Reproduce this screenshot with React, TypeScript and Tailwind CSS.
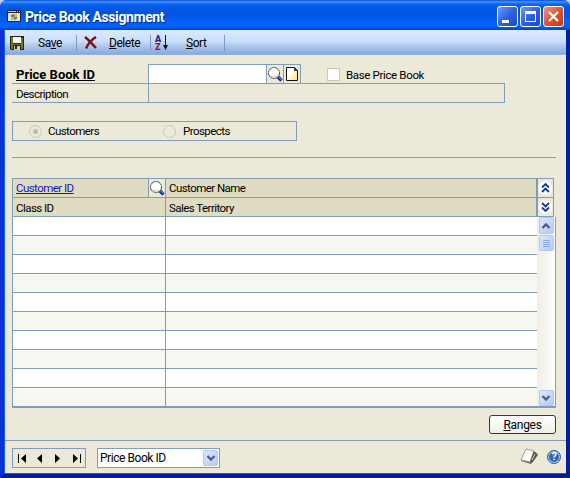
import React from "react";

function Magnifier() {
  return (
    <svg width="16" height="16" viewBox="0 0 16 16">
      <path d="M10.500 10.500l4 4" stroke="#0b2a8c" strokeWidth="3.400" />
      <path d="M11.300 10.700l3 3" stroke="#4f86e8" strokeWidth="1.200" />
      <circle cx="7" cy="7" r="5.500" fill="#fff" stroke="#333" strokeWidth="1" strokeDasharray="2 .5" />
      <path d="M3.700 9.700a4.200 4.200 0 0 0 6 .2" stroke="#b9b9b9" fill="none" />
    </svg>
  );
}

function PageIcon() {
  return (
    <svg width="14" height="16" viewBox="0 0 14 16">
      <defs>
        <linearGradient id="paper" x1="0" y1="0" x2="1" y2="1">
          <stop offset=".35" stopColor="#fff" />
          <stop offset="1" stopColor="#f2ec60" />
        </linearGradient>
      </defs>
      <path d="M1.500 14.500V1.500h8L12.500 4.500v10z" fill="url(#paper)" stroke="#111" />
      <path d="M9 1.500V5h3.500z" fill="#333" />
    </svg>
  );
}

function DoubleChevron({ down = false }: { down?: boolean }) {
  return (
    <svg width="15" height="16" viewBox="0 0 15 16" className={down ? "rotate-180" : ""}>
      <circle cx="7.500" cy="8" r="7" fill="#fff" />
      <path d="M4 7.500L7.500 4L11 7.500M4 12L7.500 8.500L11 12" stroke="#123a94" strokeWidth="1.900" fill="none" />
    </svg>
  );
}

function Chevron({ down = false }: { down?: boolean }) {
  return (
    <svg width="10" height="8" viewBox="0 0 10 8" className={down ? "rotate-180" : ""}>
      <path d="M1.500 6L5 2.500L8.500 6" stroke="#4d6185" strokeWidth="2.400" fill="none" />
    </svg>
  );
}

const scrollButton =
  "flex items-center justify-center rounded-[2px] border border-[#b5c8f5] bg-linear-to-br from-[#dce7ff] to-[#b5c9f8]";

function TitleBar() {
  return (
    <header className="flex h-[30px] shrink-0 items-start pl-[7px] pr-[6px] [background-image:linear-gradient(#0a4ad0_0,#3f94ff_6%,#0867f3_14%,#0055e0_28%,#0055e5_50%,#0063fb_78%,#0062f7_90%,#0041ca_100%)]">
      <svg width="14" height="13" viewBox="0 0 14 13" className="mt-[10px]">
        <path d="M0 0h14v12H0z" fill="#16254f" />
        <path d="M1 3h12v8H1z" fill="#e7e5d9" />
        <path d="M1 1h8v1H1zM10 1h1v1h-1zM12 1h1v1h-1z" fill="#b8c7e9" />
        <path d="M4 5l3-1v3H4z" fill="#3b79d0" />
        <path d="M7 4h3v3H7z" fill="#e4ad2e" />
        <path d="M4 7h3v3H4z" fill="#e9b93c" />
        <path d="M7 7h3v2l-3 1z" fill="#2d93ac" />
      </svg>
      <h1 className="ml-[4px] mt-[8px] whitespace-nowrap text-[14px] leading-[18px] font-bold tracking-[-0.4px] text-white [text-shadow:1px_1px_1px_#002a87]">
        Price Book Assignment
      </h1>
      <div className="ml-auto mt-[6px] flex gap-[2px]">
        <button className="h-[21px] w-[21px] rounded-[3px] border border-white bg-linear-to-br from-[#6f9aff] via-[#2f61e4] to-[#1a48c8] pl-[4px] pt-[9px]">
          <i className="block h-[3px] w-[7px] bg-white" />
        </button>
        <button className="h-[21px] w-[21px] rounded-[3px] border border-white bg-linear-to-br from-[#6f9aff] via-[#2f61e4] to-[#1a48c8] pl-[4px]">
          <i className="block h-[11px] w-[11px] border border-t-[3px] border-white" />
        </button>
        <button className="flex h-[21px] w-[21px] items-center justify-center rounded-[3px] border border-white bg-linear-to-br from-[#ee967c] via-[#e0532b] to-[#c63a12]">
          <svg width="13" height="13" viewBox="0 0 13 13">
            <path d="M2 2l9 9M11 2l-9 9" stroke="#fff" strokeWidth="2.200" />
          </svg>
        </button>
      </div>
    </header>
  );
}

function Toolbar() {
  return (
    <div className="flex h-[25px] shrink-0 items-center pl-[5px] text-[12px] tracking-[-0.45px] [background-image:linear-gradient(#dbe9fd_0,#cbdffa_45%,#b2cbf0_60%,#87a9dc_97%,#a8bcd8_100%)]">
      <svg width="14" height="14" viewBox="0 0 14 14">
        <path d="M0 0h14v14H1L0 13z" fill="#26260e" />
        <path d="M1 1h2v12H1zM11 2h2v11h-2zM3 8h8v1H3z" fill="#77762b" />
        <path d="M3 1h8v6H3z" fill="#f5f7f7" />
        <path d="M4 10h6v4H4z" fill="#c9ced0" />
        <path d="M5 10h2v3H5z" fill="#26260e" />
      </svg>
      <span className="ml-[14px] w-[38px]">Sa<u>v</u>e</span>
      <i className="h-[16px] w-px bg-[#7d9bc9]" />
      <svg width="14" height="14" viewBox="0 0 14 14" className="ml-[7px]">
        <path d="M1 1c4 3 7 7 11 11" stroke="#7c1010" strokeWidth="2.400" fill="none" />
        <path d="M12 1C7 4 4 8 2 12.500" stroke="#7c1010" strokeWidth="2.400" fill="none" />
      </svg>
      <span className="ml-[11px] w-[41px]"><u>D</u>elete</span>
      <i className="h-[16px] w-px bg-[#7d9bc9]" />
      <div className="ml-[4px] flex w-[15px] items-center">
        <div className="flex flex-col text-[9px] leading-[8px] font-black">
          <span className="text-[#17278c]">A</span>
          <span className="text-[#8c1824]">Z</span>
        </div>
        <svg width="7" height="15" viewBox="0 0 7 15" className="ml-px shrink-0">
          <path d="M3 0h1v10h2l-2.500 5L1 10h2z" fill="#111" />
        </svg>
      </div>
      <span className="ml-[16px] w-[38px]"><u>S</u>ort</span>
      <i className="h-[16px] w-px bg-[#7d9bc9]" />
    </div>
  );
}

const line = "border-[#7f9db9]";

function Fields() {
  return (
    <section className="ml-[7px] mt-[9px]">
      <div className="flex h-[19px] items-stretch">
        <div className="w-[136px] pl-[4px] pt-[2px] text-[13px] leading-[17px] font-bold tracking-[0px] underline">Price Book ID</div>
        <div className={`w-[119px] border-x border-t bg-white ${line}`} />
        <div className={`flex w-[17px] items-center border-t border-r ${line}`}><Magnifier /></div>
        <div className={`flex w-[17px] items-center justify-center border-t border-r ${line}`}><PageIcon /></div>
        <div className="ml-[26px] mt-[4px] h-[13px] w-[13px] border border-[#cac8bb] bg-white" />
        <span className="ml-[6px] mt-[2px] whitespace-nowrap tracking-[-0.35px]">Base Price Book</span>
      </div>
      <div className={`flex h-[20px] w-[493px] border-y ${line}`}>
        <div className="w-[136px] pl-[4px] pt-px">Description</div>
        <div className={`flex-1 border-x ${line}`} />
      </div>
      <div className={`mt-[18px] flex h-[20px] w-[285px] items-center border pl-[16px] text-black ${line}`}>
        <i className="flex h-[13px] w-[13px] items-center justify-center rounded-full border border-[#cac8bb]">
          <b className="h-[5px] w-[5px] rounded-full bg-[#bfbdb0]" />
        </i>
        <span className="ml-[6px] w-[115px]">Customers</span>
        <i className="h-[13px] w-[13px] rounded-full border border-[#cac8bb]" />
        <span className="ml-[7px]">Prospects</span>
      </div>
      <div className={`mt-[16px] w-[544px] border-t ${line}`} />
    </section>
  );
}

function Grid() {
  return (
    <section className={`ml-[7px] mt-[20px] w-[544px] border-l ${line}`}>
      <div className={`w-[541px] border-t ${line}`}>
        <div className={`flex h-[19px] border-b bg-[#dfdcc2] ${line}`}>
          <span className="w-[135px] pl-[3px] text-[#1712c8] underline">Customer ID</span>
          <span className={`flex w-[18px] items-center border-x bg-[#ece9d8] ${line}`}><Magnifier /></span>
          <span className="flex-1 pl-[3px]">Customer Name</span>
          <span className={`flex w-[18px] items-center border-x border-l-2 bg-[#ece9d8] ${line}`}><DoubleChevron /></span>
        </div>
        <div className={`flex h-[19px] border-b bg-[#dfdcc2] ${line}`}>
          <span className={`w-[153px] border-r pl-[3px] pt-px ${line}`}>Class ID</span>
          <span className="flex-1 pl-[3px] pt-px">Sales Territory</span>
          <span className={`flex w-[18px] items-center border-x border-l-2 bg-[#ece9d8] ${line}`}><DoubleChevron down /></span>
        </div>
      </div>
      <div className={`flex h-[191px] w-[543px] border-r border-b-2 ${line}`}>
        <div className="w-[524px]">
          {Array.from({ length: 10 }, (_, i) => (
            <div key={i} className={`flex h-[19px] border-b last:h-[18px] last:border-b-0 ${line} odd:bg-white even:bg-[#f7f7f2]`}>
              <div className={`w-[153px] border-r ${line}`} />
            </div>
          ))}
        </div>
        <div className="flex w-[18px] flex-col items-center bg-linear-to-r from-[#eeede5] to-[#fefefb]">
          <div className={`h-[17px] w-[15px] ${scrollButton}`}><Chevron /></div>
          <div className={`mt-px h-[16px] w-[15px] flex-col gap-px ${scrollButton}`}>
            {[0, 1, 2, 3].map((n) => <i key={n} className="h-px w-[7px] bg-[#8ca9e8]" />)}
          </div>
          <div className={`mt-auto h-[16px] w-[15px] ${scrollButton}`}><Chevron down /></div>
        </div>
      </div>
    </section>
  );
}

function Footer() {
  return (
    <footer className={`mt-[6px] flex flex-1 items-start border-t pl-[7px] pt-[7px] ${line}`}>
      <div className={`flex h-[20px] w-[74px] items-center border pl-[5px] ${line}`}>
        <svg width="64" height="11" viewBox="0 0 64 11" fill="#000">
          <path d="M0 1h1v9H0zM8 1v9L3 5.500zM24 1v9l-5-4.500zM37 1v9l5-4.500zM55 1v9l5-4.500zM62 1h1v9h-1z" />
        </svg>
      </div>
      <div className={`ml-[11px] flex h-[20px] w-[123px] border bg-white pl-[2px] ${line}`}>
        <span className="w-[103px] text-[12px] tracking-[-0.45px]">Price Book ID</span>
        <div className={`mt-px h-[16px] w-[15px] ${scrollButton}`}><Chevron down /></div>
      </div>
      <svg width="19" height="17" viewBox="0 0 19 17" className="ml-[300px]">
        <path d="M1 13L6 2l11 3-6 11z" fill="#686862" />
        <path d="M1 12L6 1l8 2-4 11z" fill="#fff" stroke="#8a887e" strokeWidth=".8" />
        <path d="M14 3l4 4-6 8-2-1z" fill="#55554f" />
        <path d="M12 12l3-6" stroke="#d1cfc5" />
      </svg>
      <div className="ml-[8px] mt-[2px] flex h-[14px] w-[14px] items-center justify-center rounded-full border border-[#2f66ad] bg-[#2b67b7] text-[11px] font-bold text-white shadow-[inset_0_0_0_1px_#bfd4ee]">?</div>
    </footer>
  );
}

export default function App() {
  return (
    <div className="h-[478px] w-[570px] bg-[#b9ccf0] font-['Roboto','Liberation_Sans',sans-serif] text-[11.5px] leading-[18px] tracking-[-0.55px] text-black">
      <main className="flex h-full flex-col overflow-hidden rounded-t-[7px] bg-[#0041d5]">
        <TitleBar />
        <div className="flex min-h-0 flex-1 flex-col border-x-4 border-b-4 border-l-[#0831d9] border-r-[#001fa5] border-b-[#001da0]">
          <div className="flex min-h-0 flex-1 flex-col border-l border-b border-[#165de8] bg-[#ece9d8]">
            <Toolbar />
            <Fields />
            <Grid />
            <div className="flex justify-end pr-[10px] pt-[7px]">
              <button className="h-[19px] w-[67px] rounded-[3px] border border-[#153e70] bg-linear-to-b from-white to-[#f0efe7] text-[12px] leading-[16px] tracking-[-0.3px]"><u>R</u>anges</button>
            </div>
            <Footer />
          </div>
        </div>
      </main>
    </div>
  );
}
